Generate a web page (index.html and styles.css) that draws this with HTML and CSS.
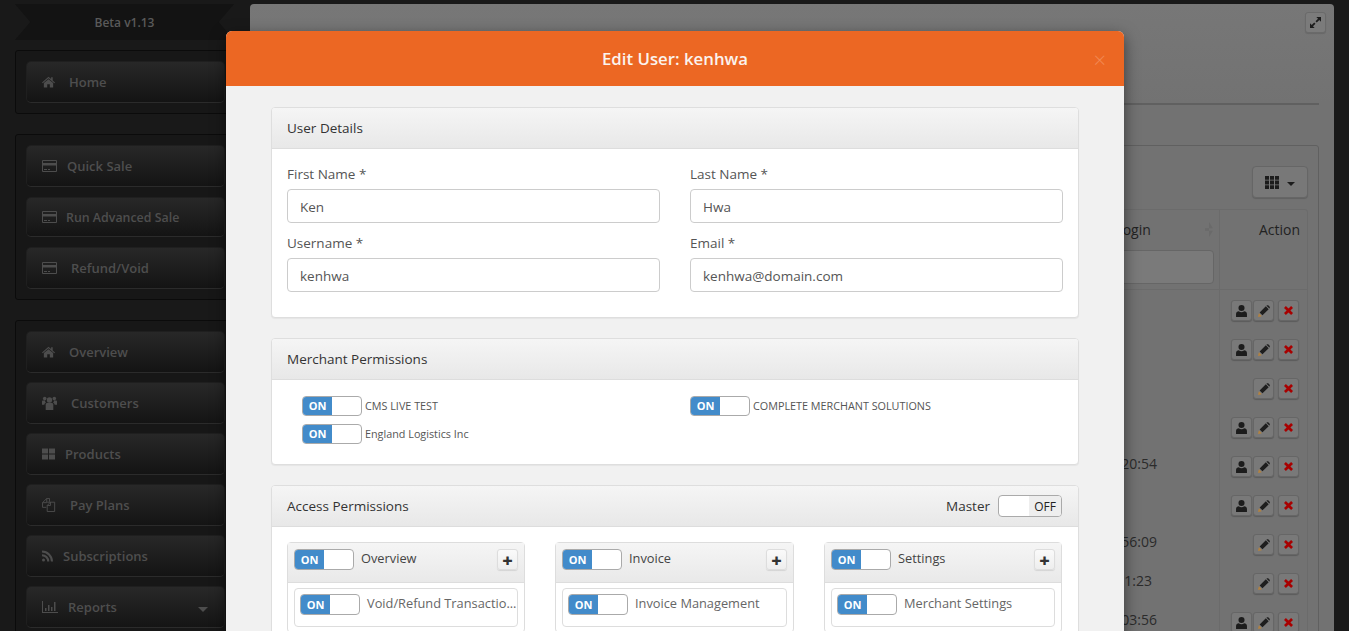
FILE: index.html
```html
<!DOCTYPE html>
<html lang="en">
<head>
<meta charset="utf-8">
<title>Edit User</title>
<link rel="stylesheet" href="styles.css">
</head>
<body>
<svg class="defs" width="0" height="0" aria-hidden="true">
  <symbol id="i-home" viewBox="0 -1.300 17.200 15"><path d="M7 0.600 9.800 3V1.200h1.700v3.300L14 6.700l-.8.900L7 2.300.8 7.600 0 6.700zM2 7.300 7 3.200l5 4.100V12H8.400V8.600H5.600V12H2z"/></symbol>
  <symbol id="i-card" viewBox="0 -1 16 14"><path fill-rule="evenodd" d="M1 0h13a1 1 0 0 1 1 1v10a1 1 0 0 1-1 1H1a1 1 0 0 1-1-1V1a1 1 0 0 1 1-1zm0 1v2h13V1zm0 4.500V11h13V5.500zM2 9h3v1H2zm4 0h2v1H6z"/></symbol>
  <symbol id="i-users" viewBox="0 0 16 14"><circle cx="7.500" cy="4" r="2.700"/><circle cx="2.700" cy="2.600" r="1.800"/><circle cx="12.300" cy="2.600" r="1.800"/><path d="M3.700 8.500c0-1 1-1.700 2-1.700h3.600c1 0 2 .7 2 1.700V14H3.700zM0 5.500c0-.6.500-1 1-1h2.200c-.2 1.300.2 1.700.8 2.200-1 .3-1.600 1-1.600 2H0zM15 5.500c0-.6-.5-1-1-1h-2.200c.2 1.300-.2 1.700-.8 2.200 1 .3 1.600 1 1.600 2H15z"/></symbol>
  <symbol id="i-grid" viewBox="0 -1.500 16 14"><path d="M0 0h6v5H0zM7 0h6v5H7zM0 6h6v5H0zM7 6h6v5H7z"/></symbol>
  <symbol id="i-files" viewBox="0 0 17 15"><path fill="none" stroke="currentColor" d="M5 .5h3v3.500M5 .5 .5 5v5h4M5 .5V5H.5M5.500 4.500H13.500V14.500H5.500V8L9 4.500M9 4.500V8H5.500"/></symbol>
  <symbol id="i-rss" viewBox="0 -1.500 16 14"><circle cx="1.500" cy="9.500" r="1.500"/><path d="M0 3.700a7.300 7.300 0 0 1 7.300 7.300H5.200A5.200 5.200 0 0 0 0 5.800zM0 0a11 11 0 0 1 11 11H8.900A8.900 8.900 0 0 0 0 2.100z"/></symbol>
  <symbol id="i-chart" viewBox="0 -1 16 14"><path d="M0 0h1v11h15v1H0zM3 7h1.500v3H3zM6 4h1.500v6H6zM9 6h1.500v4H9zM12 1h1.500v9H12z"/></symbol>
  <symbol id="i-expand" viewBox="0 0 13 13"><path d="M7.500 0H13v5.500L11 3.500 8 6.500 6.500 5 9.500 2zM5.500 13H0V7.500L2 9.500 5 6.500 6.500 8 3.500 11z"/></symbol>
  <symbol id="i-columns" viewBox="0 0 14 13"><path d="M0 0h4v3.800H0zM5 0h4v3.800H5zM10 0h4v3.800h-4zM0 4.600h4v3.800H0zM5 4.600h4v3.800H5zM10 4.600h4v3.800h-4zM0 9.200h4V13H0zM5 9.200h4V13H5zM10 9.200h4V13h-4z"/></symbol>
  <symbol id="i-user" viewBox="0 0 10 11"><circle cx="5" cy="2.800" r="2.800"/><path d="M0 8.300C0 6.800 1.200 5.800 2.500 5.800c.7.500 1.500.8 2.500.8s1.800-.3 2.500-.8C8.800 5.800 10 6.800 10 8.300V11H0z"/></symbol>
  <symbol id="i-pencil" viewBox="0 0 11 11"><path fill="#b5833f" d="M0 11 .8 7.500 3.500 10.200z"/><path d="M1.500 6.900 7.200 1.200 9.800 3.800 4.100 9.500zM7.900.5c.5-.5 1.200-.5 1.700 0l.9.900c.5.500.5 1.200 0 1.700l-.1.100L7.800.6z"/></symbol>
  <symbol id="i-times" viewBox="0 0 9 9"><path d="M1.900 0 4.500 2.600 7.100 0 9 1.900 6.400 4.500 9 7.100 7.100 9 4.500 6.400 1.900 9 0 7.100 2.600 4.500 0 1.900z"/></symbol>
</svg>

<div class="app">
  <aside class="sidebar">
    <div class="ribbon">Beta v1.13</div>
    <nav class="nav-group">
      <a class="nav-item"><svg class="nav-icon"><use href="#i-home"/></svg><span class="label m11">Home</span></a>
    </nav>
    <nav class="nav-group">
      <a class="nav-item"><svg class="nav-icon"><use href="#i-card"/></svg><span class="label m9">Quick Sale</span></a>
      <a class="nav-item nav-short"><svg class="nav-icon"><use href="#i-card"/></svg><span class="label m8 small">Run Advanced Sale</span></a>
      <a class="nav-item"><svg class="nav-icon"><use href="#i-card"/></svg><span class="label m13">Refund/Void</span></a>
    </nav>
    <nav class="nav-group nav-group-tight">
      <a class="nav-item"><svg class="nav-icon"><use href="#i-home"/></svg><span class="label m11">Overview</span></a>
      <a class="nav-item"><svg class="nav-icon"><use href="#i-users"/></svg><span class="label m13">Customers</span></a>
      <a class="nav-item"><svg class="nav-icon"><use href="#i-grid"/></svg><span class="label m7">Products</span></a>
      <a class="nav-item"><svg class="nav-icon"><use href="#i-files"/></svg><span class="label m12">Pay Plans</span></a>
      <a class="nav-item"><svg class="nav-icon"><use href="#i-rss"/></svg><span class="label m5">Subscriptions</span></a>
      <a class="nav-item"><svg class="nav-icon"><use href="#i-chart"/></svg><span class="label m10">Reports</span><span class="nav-caret"></span></a>
    </nav>
  </aside>

  <main class="content">
    <div class="content-top">
      <button class="tool-btn"><svg class="expand-icon"><use href="#i-expand"/></svg></button>
    </div>
    <hr class="rule">
    <section class="table-box">
      <div class="table-tools">
        <button class="columns-btn"><svg class="columns-icon"><use href="#i-columns"/></svg><span class="caret-dark"></span></button>
      </div>
      <div class="table">
        <div class="thead">
          <div class="th-main">
            <div class="th-title"><span>Last Login</span><span class="sort"></span></div>
            <div class="filter"></div>
          </div>
          <div class="th-action">Action</div>
        </div>
        <div class="row"><div class="cell"></div><div class="actions"><button class="act"><svg class="i-user"><use href="#i-user"/></svg></button><button class="act"><svg class="i-pencil"><use href="#i-pencil"/></svg></button><button class="act act-x"><svg class="i-times"><use href="#i-times"/></svg></button></div></div>
        <div class="row"><div class="cell"></div><div class="actions"><button class="act"><svg class="i-user"><use href="#i-user"/></svg></button><button class="act"><svg class="i-pencil"><use href="#i-pencil"/></svg></button><button class="act act-x"><svg class="i-times"><use href="#i-times"/></svg></button></div></div>
        <div class="row"><div class="cell"></div><div class="actions"><button class="act"><svg class="i-pencil"><use href="#i-pencil"/></svg></button><button class="act act-x"><svg class="i-times"><use href="#i-times"/></svg></button></div></div>
        <div class="row"><div class="cell"></div><div class="actions"><button class="act"><svg class="i-user"><use href="#i-user"/></svg></button><button class="act"><svg class="i-pencil"><use href="#i-pencil"/></svg></button><button class="act act-x"><svg class="i-times"><use href="#i-times"/></svg></button></div></div>
        <div class="row"><div class="cell">10:20:54</div><div class="actions"><button class="act"><svg class="i-user"><use href="#i-user"/></svg></button><button class="act"><svg class="i-pencil"><use href="#i-pencil"/></svg></button><button class="act act-x"><svg class="i-times"><use href="#i-times"/></svg></button></div></div>
        <div class="row"><div class="cell"></div><div class="actions"><button class="act"><svg class="i-user"><use href="#i-user"/></svg></button><button class="act"><svg class="i-pencil"><use href="#i-pencil"/></svg></button><button class="act act-x"><svg class="i-times"><use href="#i-times"/></svg></button></div></div>
        <div class="row"><div class="cell">09:56:09</div><div class="actions"><button class="act"><svg class="i-pencil"><use href="#i-pencil"/></svg></button><button class="act act-x"><svg class="i-times"><use href="#i-times"/></svg></button></div></div>
        <div class="row"><div class="cell cell-narrow">11:31:23</div><div class="actions"><button class="act"><svg class="i-pencil"><use href="#i-pencil"/></svg></button><button class="act act-x"><svg class="i-times"><use href="#i-times"/></svg></button></div></div>
        <div class="row"><div class="cell">14:03:56</div><div class="actions"><button class="act"><svg class="i-user"><use href="#i-user"/></svg></button><button class="act"><svg class="i-pencil"><use href="#i-pencil"/></svg></button><button class="act act-x"><svg class="i-times"><use href="#i-times"/></svg></button></div></div>
      </div>
    </section>
  </main>
</div>

<div class="modal" role="dialog">
  <header class="modal-head">
    <h1 class="modal-title">Edit User: kenhwa</h1>
    <span class="modal-close">×</span>
  </header>
  <div class="modal-body">
    <section class="panel">
      <div class="panel-head">User Details</div>
      <div class="panel-body form-grid">
        <label class="field"><span class="field-label">First Name *</span><input class="input" value="Ken"></label>
        <label class="field"><span class="field-label">Last Name *</span><input class="input" value="Hwa"></label>
        <label class="field"><span class="field-label">Username *</span><input class="input" value="kenhwa"></label>
        <label class="field"><span class="field-label">Email *</span><input class="input" value="kenhwa@domain.com"></label>
      </div>
    </section>

    <section class="panel">
      <div class="panel-head">Merchant Permissions</div>
      <div class="panel-body merchant-grid">
        <div class="merchant"><span class="switch"><span class="on">ON</span></span><span class="merchant-name">CMS LIVE TEST</span></div>
        <div class="merchant"><span class="switch"><span class="on">ON</span></span><span class="merchant-name">COMPLETE MERCHANT SOLUTIONS</span></div>
        <div class="merchant"><span class="switch"><span class="on">ON</span></span><span class="merchant-name">England Logistics Inc</span></div>
      </div>
    </section>

    <section class="panel">
      <div class="panel-head panel-head-split">
        <span>Access Permissions</span>
        <span class="master">Master<span class="switch switch-off"><span class="off">OFF</span></span></span>
      </div>
      <div class="panel-body access-grid">
        <div class="card">
          <div class="card-head"><span class="switch"><span class="on">ON</span></span><span class="card-title">Overview</span><button class="plus">+</button></div>
          <div class="card-body"><div class="perm"><span class="switch"><span class="on">ON</span></span><span class="perm-name">Void/Refund Transactio...</span></div></div>
        </div>
        <div class="card">
          <div class="card-head"><span class="switch"><span class="on">ON</span></span><span class="card-title">Invoice</span><button class="plus">+</button></div>
          <div class="card-body"><div class="perm"><span class="switch"><span class="on">ON</span></span><span class="perm-name">Invoice Management</span></div></div>
        </div>
        <div class="card">
          <div class="card-head"><span class="switch"><span class="on">ON</span></span><span class="card-title">Settings</span><button class="plus">+</button></div>
          <div class="card-body"><div class="perm"><span class="switch"><span class="on">ON</span></span><span class="perm-name">Merchant Settings</span></div></div>
        </div>
      </div>
    </section>
  </div>
</div>
</body>
</html>
```

FILE: styles.css
```css
* { box-sizing: border-box; }
html, body { height: 100%; }
body {
  margin: 0;
  overflow: hidden;
  background: #191919;
  font-family: "Open Sans", "Noto Sans", sans-serif;
  font-size: 14px;
  color: #333;
}
.defs { position: absolute; }
button { font-family: inherit; padding: 0; cursor: pointer; }

.app { display: flex; height: 100vh; overflow: hidden; }

/* sidebar */
.sidebar {
  flex: none;
  width: 250px;
  padding: 4px 0 0 15px;
}
.ribbon {
  width: 219px;
  height: 36px;
  line-height: 37px;
  text-align: center;
  font-size: 12px;
  font-weight: 600;
  color: #5a5a5a;
  background: #131313;
  clip-path: polygon(0 0, 100% 0, 93% 50%, 100% 100%, 0 100%, 7% 50%);
  margin-bottom: 10px;
}
.nav-group {
  width: 225px;
  display: flex;
  flex-direction: column;
  gap: 10px;
  padding: 10px;
  border: 1px solid #0b0b0b;
  border-radius: 3px;
  background: #171717;
  margin-bottom: 20px;
}
.nav-group-tight { gap: 9px; }
.nav-item {
  flex: none;
  display: flex;
  align-items: center;
  width: 199px;
  height: 42px;
  padding: 0 16px 0 15px;
  border-radius: 5px;
  background: linear-gradient(#282828, #141414);
  border: 1px solid #1f1f1f;
  border-bottom-color: #2b2b2b;
  color: #4e4e4e;
  font-size: 13px;
  font-weight: 600;
}
.nav-short { height: 40px; }
.nav-icon { width: 16px; height: 14px; flex: none; fill: #4d4d4d; color: #4d4d4d; }
.label { white-space: nowrap; }
.small { font-size: 12.400px; }
.m5 { margin-left: 5px; }
.m7 { margin-left: 7px; }
.m8 { margin-left: 8px; }
.m9 { margin-left: 9px; }
.m10 { margin-left: 10px; }
.m11 { margin-left: 11px; }
.m12 { margin-left: 12px; }
.m13 { margin-left: 13px; }
.nav-caret {
  margin-left: auto;
  margin-top: 4px;
  border: 5px solid transparent;
  border-top-color: #4d4d4d;
  border-bottom-width: 0;
}

/* page behind the modal */
.content {
  flex: none;
  width: 1084px;
  height: 700px;
  margin-top: 4px;
  border-radius: 4px 4px 0 0;
  background: linear-gradient(#777 0, #727272 100px);
  padding: 8px 15px 0 0;
}
.content-top { display: flex; justify-content: flex-end; margin-right: -7px; height: 91px; }
.tool-btn {
  width: 21px;
  height: 21px;
  border: 1px solid #6a6a6a;
  border-radius: 3px;
  background: #7b7b7b;
  display: flex;
  align-items: center;
  justify-content: center;
  box-shadow: 0 1px 1px rgba(0,0,0,.12);
}
.expand-icon { width: 11px; height: 11px; fill: #1c1c1c; }
.rule { border: 0; height: 2px; background: #606060; margin: 0; }
.table-box {
  margin-top: 40px;
  border: 1px solid #606060;
  border-radius: 3px;
  padding: 20px 10px 0;
}
.table-tools { display: flex; justify-content: flex-end; margin-bottom: 11px; }
.columns-btn {
  width: 56px;
  height: 32px;
  border: 1px solid #666;
  border-radius: 4px;
  background: #787878;
  display: flex;
  align-items: center;
  justify-content: center;
  gap: 8px;
  box-shadow: 0 1px 1px rgba(0,0,0,.15);
}
.columns-icon { width: 14px; height: 13px; fill: #1c1c1c; }
.caret-dark { border: 4px solid transparent; border-top-color: #1c1c1c; border-bottom-width: 0; margin-top: 3px; }
.table { border: 1px solid #6b6b6b; border-radius: 3px 3px 0 0; }
.thead { display: flex; height: 80px; border-bottom: 1px solid #6b6b6b; }
.th-main { flex: 1; padding: 9px 5px 0 0; display: flex; flex-direction: column; align-items: flex-end; }
.th-title { display: flex; justify-content: space-between; align-items: center; width: 400px; height: 21px; padding-left: 271px; padding-right: 1px; font-size: 14px; font-weight: 500; color: #222; }
.sort { width: 8px; height: 15px; background: #6a6a6a; clip-path: polygon(50% 0, 100% 42%, 0 42%, 0 58%, 100% 58%, 50% 100%); }
.filter { width: 400px; height: 34px; margin-top: 10px; background: #7a7a7a; border: 1px solid #666; border-radius: 4px; }
.th-action { flex: none; width: 88px; border-left: 1px solid #6b6b6b; padding: 10px 7px 0 0; text-align: right; font-weight: 500; font-size: 14px; color: #222; }
.row { display: flex; height: 39px; }
.cell { flex: 1; padding: 8px 62px 0 0; text-align: right; line-height: 20px; color: #2b2b2b; font-size: 14px; white-space: nowrap; }
.cell-narrow { padding-right: 67px; }
.actions { flex: none; width: 88px; height: 39px; border-left: 1px solid #6b6b6b; display: flex; justify-content: flex-end; align-items: flex-start; gap: 1px; padding: 10px 8px 0 0; }
.act {
  width: 21px;
  height: 21px;
  border: 1px solid #666;
  border-radius: 3px;
  background: #797979;
  display: flex;
  align-items: center;
  justify-content: center;
  box-shadow: 0 1px 1px rgba(0,0,0,.2);
}
.act-x { margin-left: 3px; }
.i-user { width: 11px; height: 12px; fill: #1c1c1c; }
.i-pencil { width: 12px; height: 12px; fill: #1e1e1e; }
.i-times { width: 9px; height: 9px; fill: #a80000; }

/* modal */
.modal {
  position: absolute;
  top: 31px;
  left: 226px;
  width: 898px;
  height: 800px;
  border-radius: 6px 6px 0 0;
  background: #f1f1f1;
  box-shadow: 0 5px 15px rgba(0,0,0,.5);
  overflow: hidden;
}
.modal-head {
  display: flex;
  align-items: center;
  justify-content: center;
  position: relative;
  height: 55px;
  background: #ec6723;
}
.modal-title { margin: 0; font-size: 16.800px; font-weight: 600; line-height: 57px; color: #fbf3ee; }
.modal-close { position: absolute; right: 18px; top: 15px; font-size: 22px; line-height: 27px; color: #f28a55; font-weight: 300; }
.modal-body { padding: 21px 45px; }
.panel {
  border: 1px solid #dedede;
  border-radius: 4px;
  background: #fff;
  box-shadow: 0 1px 1px rgba(0,0,0,.05);
  margin-bottom: 20px;
}
.panel-head {
  height: 41px;
  line-height: 40px;
  padding: 0 15px;
  background: linear-gradient(#f5f5f5, #e8e8e8);
  border-bottom: 1px solid #ddd;
  border-radius: 3px 3px 0 0;
  font-size: 13.500px;
  color: #333;
}
.panel-head-split { display: flex; justify-content: space-between; align-items: center; padding-right: 16px; }
.panel-body { padding: 15px; }
.form-grid {
  display: grid;
  grid-template-columns: 373px 373px;
  column-gap: 30px;
  row-gap: 9px;
  padding: 14px 15px 25px;
  height: 168px;
}
.field { display: flex; flex-direction: column; }
.field-label { height: 26px; line-height: 23px; font-size: 13.500px; color: #555; }
.input {
  height: 34px;
  padding: 2px 12px 0;
  border: 1px solid #ccc;
  border-radius: 4px;
  background: #fff;
  font-family: inherit;
  font-size: 13.500px;
  color: #555;
}
.switch {
  flex: none;
  display: inline-flex;
  width: 60px;
  height: 21px;
  border: 1px solid #aaa;
  border-radius: 4px;
  overflow: hidden;
  background: #fff;
}
.on {
  width: 29px;
  background: #428bca;
  color: #fff;
  font-size: 11px;
  font-weight: 700;
  line-height: 19px;
  text-align: center;
}
.merchant-grid {
  display: grid;
  grid-template-columns: 388px 1fr;
  row-gap: 7px;
  padding: 16px 15px 20px 30px;
  height: 84px;
}
.merchant { display: flex; align-items: flex-start; gap: 3px; height: 20px; }
.merchant .switch { height: 20px; }
.merchant .on { line-height: 18px; }
.merchant-name { font-size: 10.800px; line-height: 19px; color: #555; white-space: nowrap; }
.master { display: flex; align-items: center; gap: 8px; font-size: 13.500px; }
.switch-off { width: 64px; height: 22px; justify-content: flex-end; }
.off { width: 32px; background: #eee; color: #222; font-size: 12px; text-align: center; line-height: 21px; }
.access-grid {
  display: grid;
  grid-template-columns: 238px 239px 238px;
  column-gap: 30px;
  padding: 15px;
}
.card { border: 1px solid #ddd; border-radius: 4px; background: #fff; }
.card-head {
  display: flex;
  align-items: flex-start;
  height: 40px;
  padding: 6px 6px 0;
  background: linear-gradient(#f5f5f5, #e9e9e9);
  border-bottom: 1px solid #ddd;
}
.card-title { margin-left: 7px; font-size: 12.800px; line-height: 18px; color: #444; }
.plus {
  margin-left: auto;
  width: 21px;
  height: 21px;
  border: 1px solid #ddd;
  border-radius: 3px;
  background: linear-gradient(#fafafa, #eee);
  font-size: 18px;
  font-weight: 800;
  line-height: 18px;
  color: #333;
  box-shadow: 0 1px 1px rgba(0,0,0,.1);
}
.card-body { padding: 5px 6px; }
.perm { display: flex; align-items: flex-start; height: 39px; padding: 5px; border: 1px solid #ddd; border-radius: 4px; }
.perm-name { margin-left: 7px; font-size: 12.800px; line-height: 18px; color: #666; white-space: nowrap; }
```
